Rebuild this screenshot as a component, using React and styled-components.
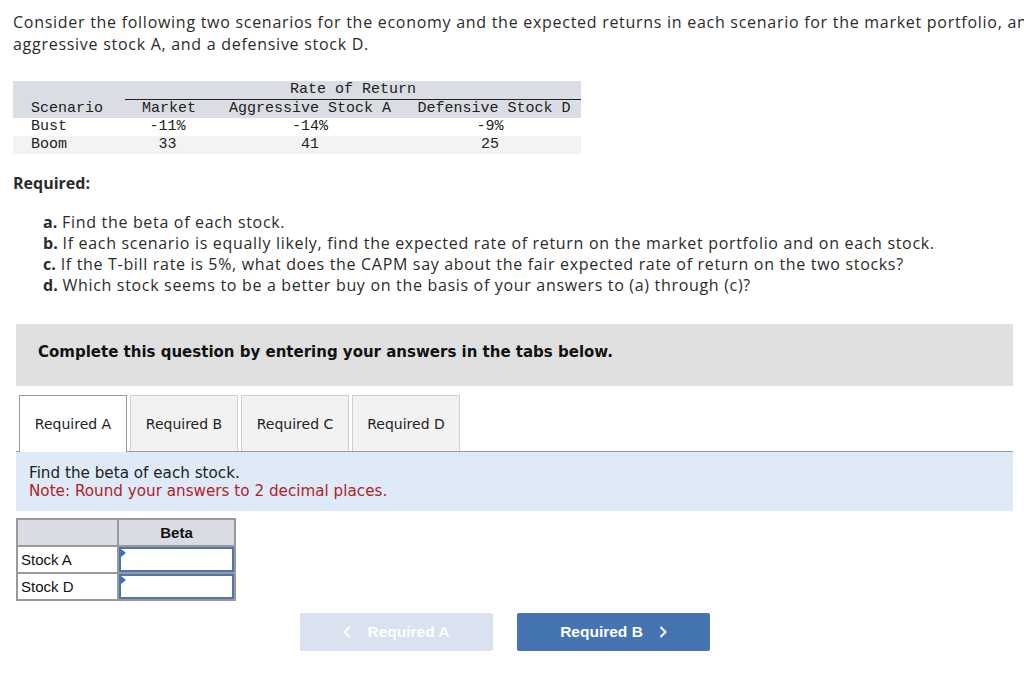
import React from "react";
import styled, { createGlobalStyle } from "styled-components";

const Global = createGlobalStyle`
  html, body {
    margin: 0;
    padding: 0;
    background: #fff;
    overflow: hidden;
  }
  body {
    font-family: "Liberation Sans", Arial, sans-serif;
    color: #333;
  }
`;

const Page = styled.div`
  width: 1024px;
  height: 678px;
  overflow: hidden;
  padding-top: 11px;
  box-sizing: border-box;
`;

const Intro = styled.p`
  margin: 0 0 0 13px;
  font-family: "Open Sans", "Liberation Sans", sans-serif;
  font-size: 16px;
  line-height: 22px;
  letter-spacing: 0.72px;
  color: #2b2b2b;
  white-space: nowrap;
`;

const DataTable = styled.table`
  margin: 26px 0 0 13px;
  width: 568px;
  border-collapse: collapse;
  font-family: "Liberation Mono", "Courier New", monospace;
  font-size: 15px;
  color: #222;

  td {
    padding: 0;
    height: 18px;
    line-height: 18px;
    white-space: nowrap;
  }
`;

const HeadRow = styled.tr`
  background: #dadde3;
`;

const GroupCell = styled.td`
  text-align: center;
  border-bottom: 1px solid #222;
`;

const Row = styled.tr`
  background: ${({ shade }) => (shade ? "#f3f3f3" : "#fff")};
`;

const Cell = styled.td`
  text-align: ${({ align }) => align || "center"};
  padding-left: ${({ pl }) => pl || 0}px !important;
  padding-right: ${({ pr }) => pr || 0}px !important;
`;

const Heading = styled.h3`
  margin: 19px 0 0 13px;
  font-family: "Open Sans", "Liberation Sans", sans-serif;
  font-size: 16px;
  font-weight: bold;
  line-height: 21px;
  color: #2b2b2b;
`;

const Tasks = styled.div`
  margin: 18px 0 0 43px;
  font-family: "Open Sans", "Liberation Sans", sans-serif;
  font-size: 16px;
  line-height: 21px;
  letter-spacing: 0.68px;
  color: #2b2b2b;

  b {
    font-weight: bold;
    letter-spacing: 0;
  }
`;

const Panel = styled.div`
  margin: 28px 0 0 16px;
  width: 997px;
`;

const Banner = styled.div`
  height: 62px;
  background: #e0e0e0;
  display: flex;
  align-items: center;
  padding: 0 0 6px 22px;
  box-sizing: border-box;
  font-family: "DejaVu Sans", Verdana, sans-serif;
  font-weight: bold;
  font-size: 15px;
  color: #111;
`;

const TabBar = styled.div`
  margin-top: 9px;
  display: flex;
  align-items: flex-end;
  gap: 3px;
  padding-left: 3px;
  border-bottom: 1px solid #9a9a9a;
`;

const Tab = styled.div`
  width: 108px;
  box-sizing: border-box;
  display: flex;
  align-items: center;
  justify-content: center;
  font-family: "DejaVu Sans", Verdana, sans-serif;
  font-size: 14px;
  color: #222;
  border: 1px solid ${({ active }) => (active ? "#9a9a9a" : "#cfcfcf")};
  border-bottom: none;
  background: ${({ active }) => (active ? "#fff" : "#f2f2f2")};
  margin-bottom: ${({ active }) => (active ? "-1px" : "0")};
  height: ${({ active }) => (active ? "57px" : "56px")};
`;

const Prompt = styled.div`
  background: #deeaf7;
  height: 59px;
  padding: 12px 0 0 13px;
  box-sizing: border-box;
  font-family: "DejaVu Sans", Verdana, sans-serif;
  font-size: 15.2px;
  line-height: 18px;
  color: #222;
`;

const Note = styled.div`
  color: #b3211f;
`;

const AnswerTable = styled.table`
  margin-top: 7px;
  border-collapse: collapse;
  font-family: "Liberation Sans", Arial, sans-serif;
  font-size: 15px;
  color: #111;

  td {
    border: 2px solid #999;
    padding: 0;
  }
`;

const AnsHead = styled.td`
  background: #d9dce3;
  height: 25px;
  width: ${({ w }) => w}px;
  text-align: center;
  font-weight: bold;
`;

const Label = styled.td`
  height: 25px;
  padding-left: 3px !important;
`;

const InputCell = styled.td`
  position: relative;
  padding: 0 !important;
`;

const Field = styled.input`
  display: block;
  width: 115px;
  height: 25px;
  box-sizing: border-box;
  border: 2px solid #4d76b0;
  outline: none;
  background: #fff;
  margin: 0;
`;

const Flag = styled.span`
  position: absolute;
  left: 2px;
  top: 2px;
  width: 0;
  height: 0;
  border-top: 4px solid transparent;
  border-bottom: 4px solid transparent;
  border-left: 5px solid #3d6fc0;
`;

const NavRow = styled.div`
  margin-top: 12px;
  display: flex;
  gap: 24px;
  padding-left: 284px;
`;

const NavButton = styled.div`
  width: 193px;
  height: 38px;
  border-radius: 2px;
  display: flex;
  align-items: center;
  justify-content: center;
  gap: 16px;
  font-family: "Liberation Sans", Arial, sans-serif;
  font-weight: bold;
  font-size: 15.5px;
  color: #fff;
  background: ${({ disabled }) => (disabled ? "#d9e2ee" : "#4574b3")};
`;

const Chevron = ({ dir }) => (
  <svg width="8" height="12" viewBox="0 0 8 12">
    <path
      d={dir === "left" ? "M6.5 1 L1.5 6 L6.5 11" : "M1.5 1 L6.5 6 L1.5 11"}
      fill="none"
      stroke="#fff"
      strokeWidth="2"
    />
  </svg>
);

const rows = [
  { name: "Bust", market: "-11%", a: "-14%", d: "-9%" },
  { name: "Boom", market: "33", a: "41", d: "25", shade: true },
];

export default function App() {
  return (
    <Page>
      <Global />
      <Intro>
        Consider the following two scenarios for the economy and the expected returns in each scenario for the market portfolio, an
        <br />
        aggressive stock A, and a defensive stock D.
      </Intro>

      <DataTable>
        <colgroup>
          <col style={{ width: 112 }} />
          <col style={{ width: 88 }} />
          <col style={{ width: 194 }} />
          <col style={{ width: 174 }} />
        </colgroup>
        <tbody>
          <HeadRow>
            <td />
            <GroupCell colSpan={3}>Rate of Return</GroupCell>
          </HeadRow>
          <HeadRow>
            <Cell align="left" pl={18}>Scenario</Cell>
            <Cell>Market</Cell>
            <Cell>Aggressive Stock A</Cell>
            <Cell>Defensive Stock D</Cell>
          </HeadRow>
          {rows.map((r) => (
            <Row key={r.name} shade={r.shade}>
              <Cell align="left" pl={18}>{r.name}</Cell>
              <Cell pr={3}>{r.market}</Cell>
              <Cell>{r.a}</Cell>
              <Cell pr={8}>{r.d}</Cell>
            </Row>
          ))}
        </tbody>
      </DataTable>

      <Heading>Required:</Heading>
      <Tasks>
        <div><b>a.</b> Find the beta of each stock.</div>
        <div><b>b.</b> If each scenario is equally likely, find the expected rate of return on the market portfolio and on each stock.</div>
        <div><b>c.</b> If the T-bill rate is 5%, what does the CAPM say about the fair expected rate of return on the two stocks?</div>
        <div><b>d.</b> Which stock seems to be a better buy on the basis of your answers to (a) through (c)?</div>
      </Tasks>

      <Panel>
        <Banner>Complete this question by entering your answers in the tabs below.</Banner>
        <TabBar>
          <Tab active>Required A</Tab>
          <Tab>Required B</Tab>
          <Tab>Required C</Tab>
          <Tab>Required D</Tab>
        </TabBar>
        <Prompt>
          <div>Find the beta of each stock.</div>
          <Note>Note: Round your answers to 2 decimal places.</Note>
        </Prompt>

        <AnswerTable>
          <tbody>
            <tr>
              <AnsHead w={99} />
              <AnsHead w={115}>Beta</AnsHead>
            </tr>
            {["Stock A", "Stock D"].map((s) => (
              <tr key={s}>
                <Label>{s}</Label>
                <InputCell>
                  <Field />
                  <Flag />
                </InputCell>
              </tr>
            ))}
          </tbody>
        </AnswerTable>

        <NavRow>
          <NavButton disabled>
            <Chevron dir="left" />
            Required A
          </NavButton>
          <NavButton>
            Required B
            <Chevron dir="right" />
          </NavButton>
        </NavRow>
      </Panel>
    </Page>
  );
}
